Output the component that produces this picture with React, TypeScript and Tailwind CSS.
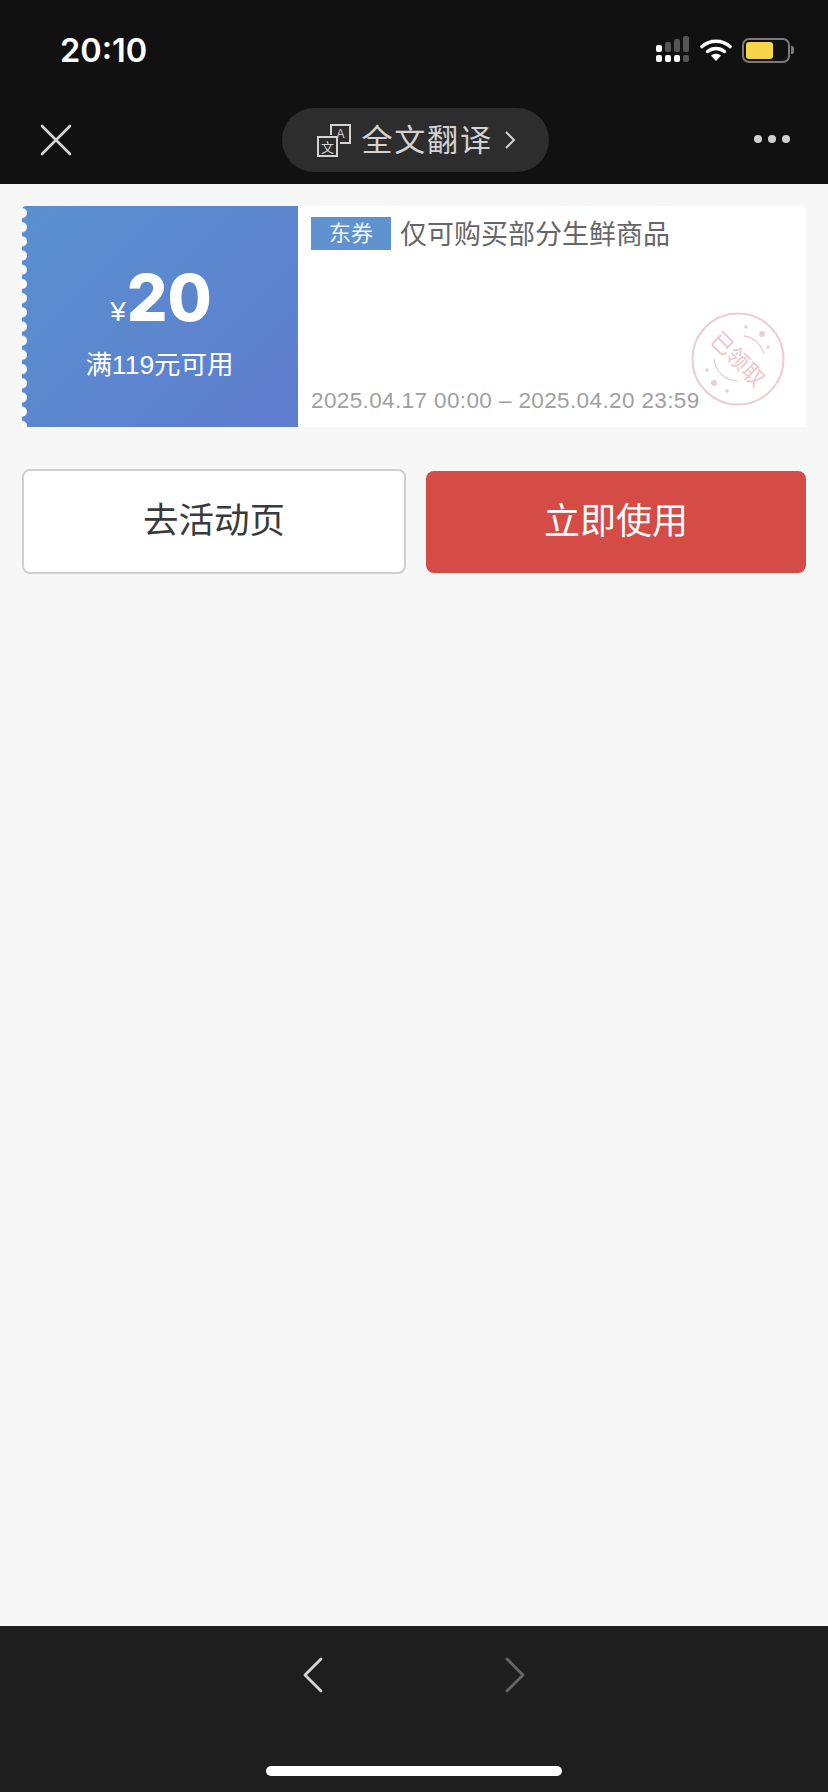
const cjk = "font-['Liberation_Sans','Noto_Sans_CJK_SC',sans-serif]";

function SignalIcon() {
  return (
    <svg width="34" height="28" viewBox="0 0 34 28">
      <rect x="0" y="9" width="6" height="7" rx="2" fill="#fff" />
      <rect x="0" y="19" width="6" height="7" rx="2" fill="#fff" />
      <rect x="9" y="6" width="6" height="10" rx="2" fill="#555" />
      <rect x="9" y="19" width="6" height="7" rx="2" fill="#fff" />
      <rect x="18" y="3" width="6" height="13" rx="2" fill="#555" />
      <rect x="18" y="19" width="6" height="7" rx="2" fill="#fff" />
      <rect x="27" y="0" width="6" height="16" rx="2" fill="#555" />
      <rect x="27" y="19" width="6" height="7" rx="2" fill="#555" />
    </svg>
  );
}

function WifiIcon() {
  return (
    <svg width="32" height="24" viewBox="0 0 32 24" fill="none">
      <path d="M2 8.5C10 1.5 22 1.5 30 8.5" stroke="#fff" strokeWidth="3.6" strokeLinecap="round" />
      <path d="M7.5 13.5C12.5 9.5 19.5 9.5 24.5 13.5" stroke="#fff" strokeWidth="3.4" strokeLinecap="round" />
      <path d="M11 17.5C14 15 18 15 21 17.5L16 23Z" fill="#fff" />
    </svg>
  );
}

function BatteryIcon() {
  return (
    <div className="flex items-center gap-[1px]">
      <div className="h-[25px] w-[48px] rounded-[7px] border-2 border-[#7a7a7a] p-[2px]">
        <div className="h-full w-[27px] rounded-[3px] bg-[#f8d548]" />
      </div>
      <div className="h-[8px] w-[3px] rounded-r-[2px] bg-[#7a7a7a]" />
    </div>
  );
}

function TranslateIcon() {
  return (
    <svg width="34" height="34" viewBox="0 0 34 34" fill="none" stroke="#d2d2d2" strokeWidth="2">
      <path d="M14 12V2H33V20H23" />
      <rect x="1" y="14" width="19" height="19" />
      <text x="23.5" y="15" fontSize="12" textAnchor="middle" fill="#d2d2d2" stroke="none" fontFamily="'Liberation Sans',sans-serif">A</text>
      <text x="10.5" y="28.5" fontSize="13" textAnchor="middle" fill="#d2d2d2" stroke="none" fontFamily="'Noto Sans CJK SC',sans-serif">文</text>
    </svg>
  );
}

function Stamp() {
  return (
    <svg width="94" height="94" viewBox="0 0 94 94" fill="none" className="absolute right-[21px] bottom-[21px]">
      <circle cx="47" cy="47" r="45.5" stroke="#eecdd1" strokeWidth="2" />
      <path d="M53 24A24 24 0 0 1 73 42" stroke="#eecdd1" strokeWidth="1.4" />
      <path d="M23 47A24 24 0 0 0 46 69" stroke="#eecdd1" strokeWidth="1.4" />
      <g fill="#eecdd1">
        <circle cx="55" cy="15" r="1.8" />
        <circle cx="71" cy="22" r="3" />
        <circle cx="77" cy="35" r="1.8" />
        <circle cx="16" cy="58" r="1.8" />
        <circle cx="23" cy="71" r="3" />
        <circle cx="36" cy="79" r="1.8" />
      </g>
      <text x="47" y="55" fontSize="22" textAnchor="middle" fill="#efc6ca" fontFamily="'Noto Sans CJK SC',sans-serif" transform="rotate(45 47 47)">已领取</text>
    </svg>
  );
}

export default function App() {
  return (
    <div className={`flex h-[1792px] w-[828px] flex-col bg-[#f7f7f7] ${cjk}`}>
      <header className="h-[184px] bg-[#111111]">
        <div className="flex h-[100px] items-start justify-between pl-[60px] pr-[34px] pt-[30px]">
          <span className="text-[32.5px] leading-[42px] font-semibold text-white font-['Inter',sans-serif]">20:10</span>
          <div className="flex items-center gap-[10px] pt-[6px]">
            <SignalIcon />
            <WifiIcon />
            <BatteryIcon />
          </div>
        </div>
        <div className="flex h-[84px] items-start justify-between pl-[40px] pr-[38px] pt-[8px]">
          <div className="w-[36px] pt-[16px]">
            <svg width="32" height="32" viewBox="0 0 32 32" stroke="#d6d6d6" strokeWidth="2.6" strokeLinecap="round">
              <path d="M2 2L30 30M30 2L2 30" />
            </svg>
          </div>
          <div className="flex h-[64px] w-[267px] items-center gap-[11px] rounded-full bg-[#2d2d2d] pl-[35px]">
            <TranslateIcon />
            <span className="text-[31px] leading-none tracking-[1.8px] text-[#d2d2d2]">全文翻译</span>
            <svg width="12" height="20" viewBox="0 0 12 20" fill="none" stroke="#d2d2d2" strokeWidth="2">
              <path d="M2 2L10 10L2 18" />
            </svg>
          </div>
          <div className="mt-[27px] flex gap-[6px]">
            <span className="size-[8px] rounded-full bg-[#d0d0d0]" />
            <span className="size-[8px] rounded-full bg-[#d0d0d0]" />
            <span className="size-[8px] rounded-full bg-[#d0d0d0]" />
          </div>
        </div>
      </header>

      <main className="flex-1 px-[22px] pt-[22px]">
        <div className="flex h-[221px] bg-white">
          <div className="relative flex w-[276px] flex-col items-center rounded-l-[4px] bg-[linear-gradient(135deg,#5990d0,#5f7dcd)] pt-[61px] text-white">
            <div className="absolute inset-y-0 left-0 w-[8px] bg-[radial-gradient(circle_at_0_7px,#fbfbfb_4.5px,transparent_5.5px)] bg-[length:8px_14.2px]" />
            <div className="flex items-baseline pl-[2px]">
              <span className="text-[28px] leading-none font-['Liberation_Sans',sans-serif]">¥</span>
              <span className="ml-[1px] text-[64px] leading-[62px] font-extrabold font-['Inter',sans-serif]">20</span>
            </div>
            <div className="mt-[19px] pr-[1px] text-[26.5px] leading-[34px]">满119元可用</div>
          </div>
          <div className="relative flex flex-1 flex-col justify-between pb-[12px] pl-[13px] pt-[11px]">
            <div className="flex items-start gap-[9px]">
              <span className="flex h-[33px] w-[80px] items-center justify-center bg-[#5f93d0] text-[22px] text-[#f2f6fb]">东券</span>
              <span className="pt-[2px] text-[27px] leading-[33px] text-[#666666]">仅可购买部分生鲜商品</span>
            </div>
            <div className="text-[22.5px] leading-[28px] tracking-[0.38px] text-[#a0a0a0]">2025.04.17 00:00 – 2025.04.20 23:59</div>
            <Stamp />
          </div>
        </div>

        <div className="mt-[42px] flex items-center gap-[20px]">
          <button className="h-[105px] w-[384px] rounded-[8px] border-2 border-[#cfcfcf] bg-white text-[35.5px] text-[#3a3a3a]">去活动页</button>
          <button className="h-[102px] w-[380px] rounded-[8px] bg-[#d54c47] text-[36px] text-white">立即使用</button>
        </div>
      </main>

      <footer className="flex h-[166px] flex-col items-center bg-[#1e1e1e]">
        <div className="flex gap-[182px] pt-[31px]">
          <svg width="20" height="36" viewBox="0 0 20 36" fill="none" stroke="#d6d6d6" strokeWidth="2.8" strokeLinecap="round" strokeLinejoin="round">
            <path d="M18 2L2 18L18 34" />
          </svg>
          <svg width="20" height="36" viewBox="0 0 20 36" fill="none" stroke="#666666" strokeWidth="2.8" strokeLinecap="round" strokeLinejoin="round">
            <path d="M2 2L18 18L2 34" />
          </svg>
        </div>
        <div className="mt-[73px] h-[10px] w-[296px] rounded-full bg-white" />
      </footer>
    </div>
  );
}
